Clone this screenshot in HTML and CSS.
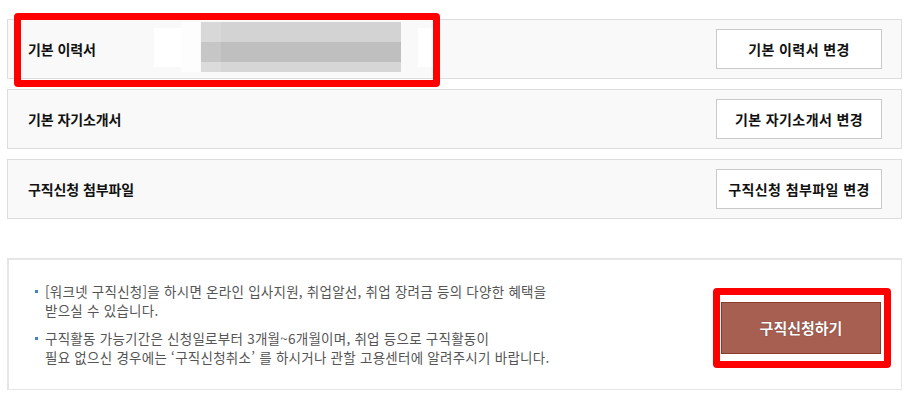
FILE: index.html
```html
<!DOCTYPE html>
<html lang="ko">
<head>
<meta charset="utf-8">
<link rel="stylesheet" href="styles.css">
</head>
<body>
<div class="page">
  <div class="rows">
    <div class="row">
      <span class="label">기본 이력서</span>
      <div class="blur">
        <span class="w1"></span><span class="w2"></span>
        <span class="g"></span>
        <span class="w3"></span>
      </div>
      <button class="btn">기본 이력서 변경</button>
    </div>
    <div class="row">
      <span class="label">기본 자기소개서</span>
      <button class="btn">기본 자기소개서 변경</button>
    </div>
    <div class="row">
      <span class="label">구직신청 첨부파일</span>
      <button class="btn">구직신청 첨부파일 변경</button>
    </div>
  </div>
  <div class="apply">
    <ul class="notes">
      <li>[워크넷 구직신청]을 하시면 온라인 입사지원, 취업알선, 취업 장려금 등의 다양한 혜택을<br>받으실 수 있습니다.</li>
      <li>구직활동 가능기간은 신청일로부터 3개월~6개월이며, 취업 등으로 구직활동이<br>필요 없으신 경우에는 ‘구직신청취소’ 를 하시거나 관할 고용센터에 알려주시기 바랍니다.</li>
    </ul>
    <div class="apply-btn-wrap">
      <button class="apply-btn">구직신청하기</button>
      <span class="mark mark-btn"></span>
    </div>
  </div>
  <span class="mark mark-row"></span>
</div>
</body>
</html>
```

FILE: styles.css
```css
* { box-sizing: border-box; }
html, body { margin: 0; padding: 0; background: #fff; }
body {
  font-family: "Noto Sans CJK KR", "Noto Sans", sans-serif;
  color: #222;
}
.page {
  position: relative;
  width: 910px;
  padding: 19px 8px 0 7px;
}
.rows {
  display: flex;
  flex-direction: column;
  gap: 10px;
}
.row {
  position: relative;
  height: 60px;
  display: flex;
  align-items: center;
  background: #f9f9f9;
  border: 1px solid #dddddd;
  padding: 0 19px 0 20px;
}
.label {
  font-size: 14px;
  font-weight: 700;
  color: #111;
  letter-spacing: -0.1px;
}
.btn {
  margin-left: auto;
  width: 166px;
  height: 40px;
  background: #fff;
  border: 1px solid #c9c9c9;
  font-family: inherit;
  font-size: 14px;
  font-weight: 700;
  color: #111;
  padding: 0;
  letter-spacing: 0.4px;
}
.blur {
  position: absolute;
  left: 146px;
  top: 2px;
  width: 287px;
  height: 51px;
}
.blur span { position: absolute; }
.blur .w1 { left: 0; top: 6px; width: 27px; height: 39px; background: #fff; }
.blur .w2 { left: 27px; top: 0; width: 19px; height: 50px; background: #fdfdfd; }
.blur .w3 { left: 264px; top: 6px; width: 22px; height: 39px; background: #fff; }
.blur .g {
  left: 47px;
  top: 0;
  width: 200px;
  height: 50px;
  background: linear-gradient(to bottom, #d3d3d3 0, #d3d3d3 20px, #bfbfbf 20px, #bfbfbf 40px, #d6d6d6 40px);
  box-shadow: inset 20px 0 0 rgba(255,255,255,0.12);
}
.apply {
  margin-top: 39px;
  height: 132px;
  border: 2px solid #e6e6e6;
  border-right-width: 1px;
  border-bottom-width: 1px;
  background: #fff;
  display: flex;
  align-items: center;
  padding: 0 20px 0 24px;
}
.notes {
  list-style: none;
  margin: -1px 0 0;
  padding: 0;
  display: flex;
  flex-direction: column;
  gap: 9px;
}
.notes li {
  position: relative;
  padding-left: 12px;
  font-size: 13.5px;
  line-height: 19px;
  color: #555;
  letter-spacing: 0.25px;
}
.notes li::before {
  content: "";
  position: absolute;
  left: 2px;
  top: 8px;
  width: 3px;
  height: 3px;
  background: #3d86c6;
}
.apply-btn-wrap {
  position: relative;
  margin-left: auto;
  margin-top: 6px;
}
.apply-btn {
  display: block;
  width: 160px;
  height: 52px;
  background: #a65f51;
  border: 1px solid #8a3b2c;
  color: #fff;
  font-family: inherit;
  font-size: 15px;
  font-weight: 700;
  padding: 0;
  text-shadow: 0 0 1px #5a2a20;
}
.mark {
  position: absolute;
  border: 7px solid #ff0000;
  border-radius: 4px;
}
.mark-row {
  left: 14px;
  top: 13px;
  width: 426px;
  height: 74px;
}
.mark-btn {
  left: -8px;
  top: -14px;
  width: 178px;
  height: 80px;
}
```
